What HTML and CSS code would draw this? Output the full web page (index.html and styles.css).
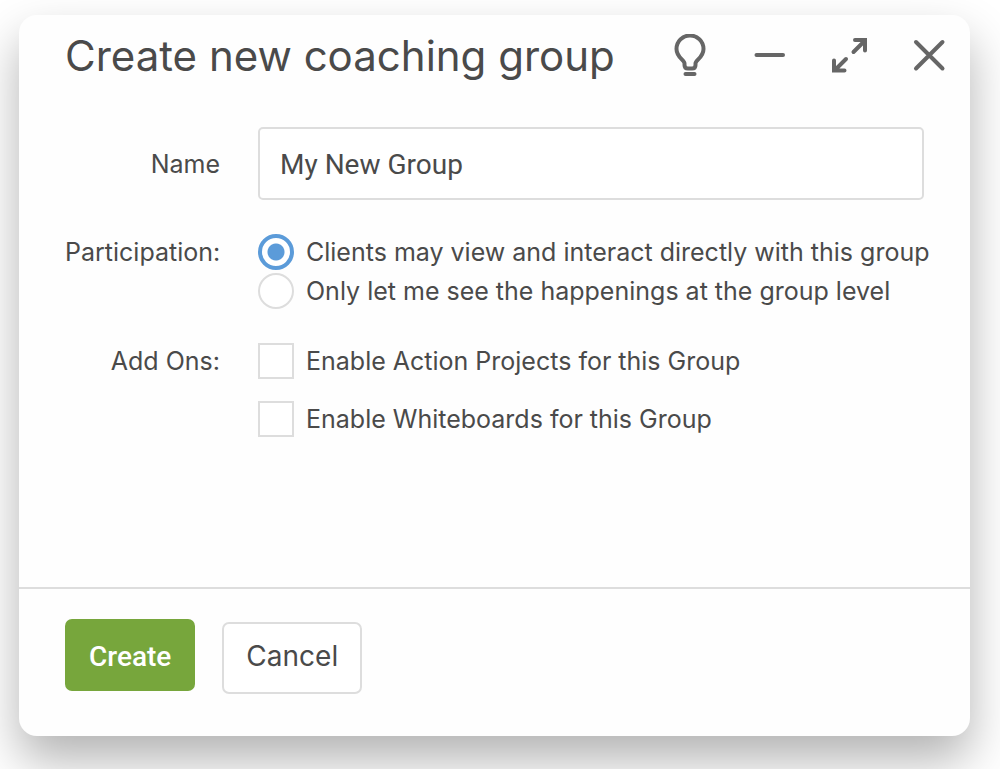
FILE: index.html
```html
<!DOCTYPE html>
<html lang="en">
<head>
<meta charset="utf-8">
<meta name="viewport" content="width=device-width, initial-scale=1">
<title>Create new coaching group</title>
<link rel="stylesheet" href="styles.css">
</head>
<body>
<form class="dialog" role="dialog" aria-labelledby="dialog-title">
  <header class="dialog-header">
    <h1 class="dialog-title" id="dialog-title">Create new coaching group</h1>
    <div class="window-actions">
      <button class="icon-button" type="button" aria-label="Tips">
        <svg class="icon" viewBox="0 0 44 44" aria-hidden="true">
          <path d="M16.5 29.500 C16.500 26 8.500 23.500 8.500 15 A13.500 13.500 0 0 1 35.500 15 C35.500 23.500 27.500 26 27.500 29.500 V31 Q27.500 34.500 24 34.500 H20 Q16.500 34.500 16.500 31 Z"/>
          <path d="M17.500 40 H26.500"/>
        </svg>
      </button>
      <button class="icon-button" type="button" aria-label="Minimize">
        <svg class="icon" viewBox="0 0 44 44" aria-hidden="true"><path d="M8.500 21 H35"/></svg>
      </button>
      <button class="icon-button" type="button" aria-label="Expand">
        <svg class="icon" viewBox="0 0 44 44" aria-hidden="true"><path d="M25.500 18 L36.500 7 M27 6 H37 V16.500 M18 25 L7 36 M6 26.500 V36.500 H16.500"/></svg>
      </button>
      <button class="icon-button" type="button" aria-label="Close">
        <svg class="icon" viewBox="0 0 44 44" aria-hidden="true"><path d="M8 8 L34.500 34.500 M34.500 8 L8 34.500"/></svg>
      </button>
    </div>
  </header>
  <div class="dialog-body">
    <div class="row row-name">
      <label class="row-label" for="name">Name</label>
      <input class="text-input" id="name" type="text" value="My New Group">
    </div>
    <div class="row" role="radiogroup" aria-labelledby="participation">
      <span class="row-label" id="participation">Participation:</span>
      <div class="options">
        <label class="option"><input class="radio" type="radio" name="participation" checked>Clients may view and interact directly with this group</label>
        <label class="option"><input class="radio" type="radio" name="participation">Only let me see the happenings at the group level</label>
      </div>
    </div>
    <div class="row" role="group" aria-labelledby="addons">
      <span class="row-label" id="addons">Add Ons:</span>
      <div class="options options-spaced">
        <label class="option"><input class="checkbox" type="checkbox">Enable Action Projects for this Group</label>
        <label class="option"><input class="checkbox" type="checkbox">Enable Whiteboards for this Group</label>
      </div>
    </div>
  </div>
  <footer class="dialog-footer">
    <button class="button button-primary" type="submit">Create</button>
    <button class="button button-secondary" type="button">Cancel</button>
  </footer>
</form>
</body>
</html>
```
FILE: styles.css
```css
* {
  box-sizing: border-box;
}

body {
  margin: 0;
  min-height: 100vh;
  padding: 15px 30px 33px 19px;
  display: flex;
  background: #fff;
  color: #4a4a4a;
  font: 25px/36px Inter, sans-serif;
}

.dialog {
  flex: 1;
  min-width: 0;
  display: flex;
  flex-direction: column;
  background: #fefefe;
  border-radius: 18px;
  box-shadow: 0 24px 48px rgba(0, 0, 0, 0.3);
}

.dialog-header {
  display: flex;
  align-items: center;
  justify-content: space-between;
  padding: 13px 18px 0 46px;
}

.dialog-title {
  margin: 0;
  font-size: 42px;
  font-weight: 400;
  line-height: 56px;
  white-space: nowrap;
}

.window-actions {
  display: flex;
  gap: 36px;
}

.icon-button {
  display: flex;
  padding: 0;
  border: 0;
  background: none;
  color: #666;
  cursor: pointer;
}

.icon {
  width: 44px;
  height: 44px;
  fill: none;
  stroke: currentColor;
  stroke-width: 4;
  stroke-linecap: round;
}

.dialog-body {
  flex: 1;
  display: flex;
  flex-direction: column;
  gap: 34px;
  padding: 43px 46px 34px;
}

.row {
  display: grid;
  grid-template-columns: 155px minmax(0, 1fr);
  column-gap: 38px;
  align-items: start;
}

.row-name {
  align-items: center;
}

.row-label {
  text-align: right;
}

.text-input {
  width: 100%;
  height: 73px;
  padding: 2px 20px 0;
  border: 2px solid #ddd;
  border-radius: 5px;
  background: #fff;
  color: #4a4a4a;
  font: 28px Roboto, sans-serif;
}

.options {
  display: flex;
  flex-direction: column;
  gap: 3px;
}

.options-spaced {
  gap: 22px;
}

.option {
  display: flex;
  align-items: center;
  gap: 12px;
  white-space: nowrap;
}

.radio,
.checkbox {
  appearance: none;
  flex: none;
  width: 36px;
  height: 36px;
  margin: 0;
  border: 2px solid #ddd;
  background: #fff;
}

.radio {
  border-radius: 50%;
}

.radio:checked {
  border: 4px solid #5b9bd9;
  background: radial-gradient(circle, #5b9bd9 8px, #fff 9px);
}

.checkbox:checked {
  background: #5b9bd9;
}

.dialog-footer {
  display: flex;
  align-items: flex-start;
  gap: 27px;
  padding: 30px 46px 42px;
  border-top: 2px solid #ddd;
}

.button {
  height: 72px;
  padding: 2px 24px 0;
  border: 0;
  border-radius: 7px;
  font: 28px Roboto, sans-serif;
  cursor: pointer;
}

.button-primary {
  background: #77a63c;
  color: #fff;
  font-weight: 500;
}

.button-secondary {
  margin-top: 3px;
  padding: 0 22px 4px;
  border: 2px solid #ddd;
  background: #fff;
  color: #4a4a4a;
  font-family: Inter, sans-serif;
}
```
